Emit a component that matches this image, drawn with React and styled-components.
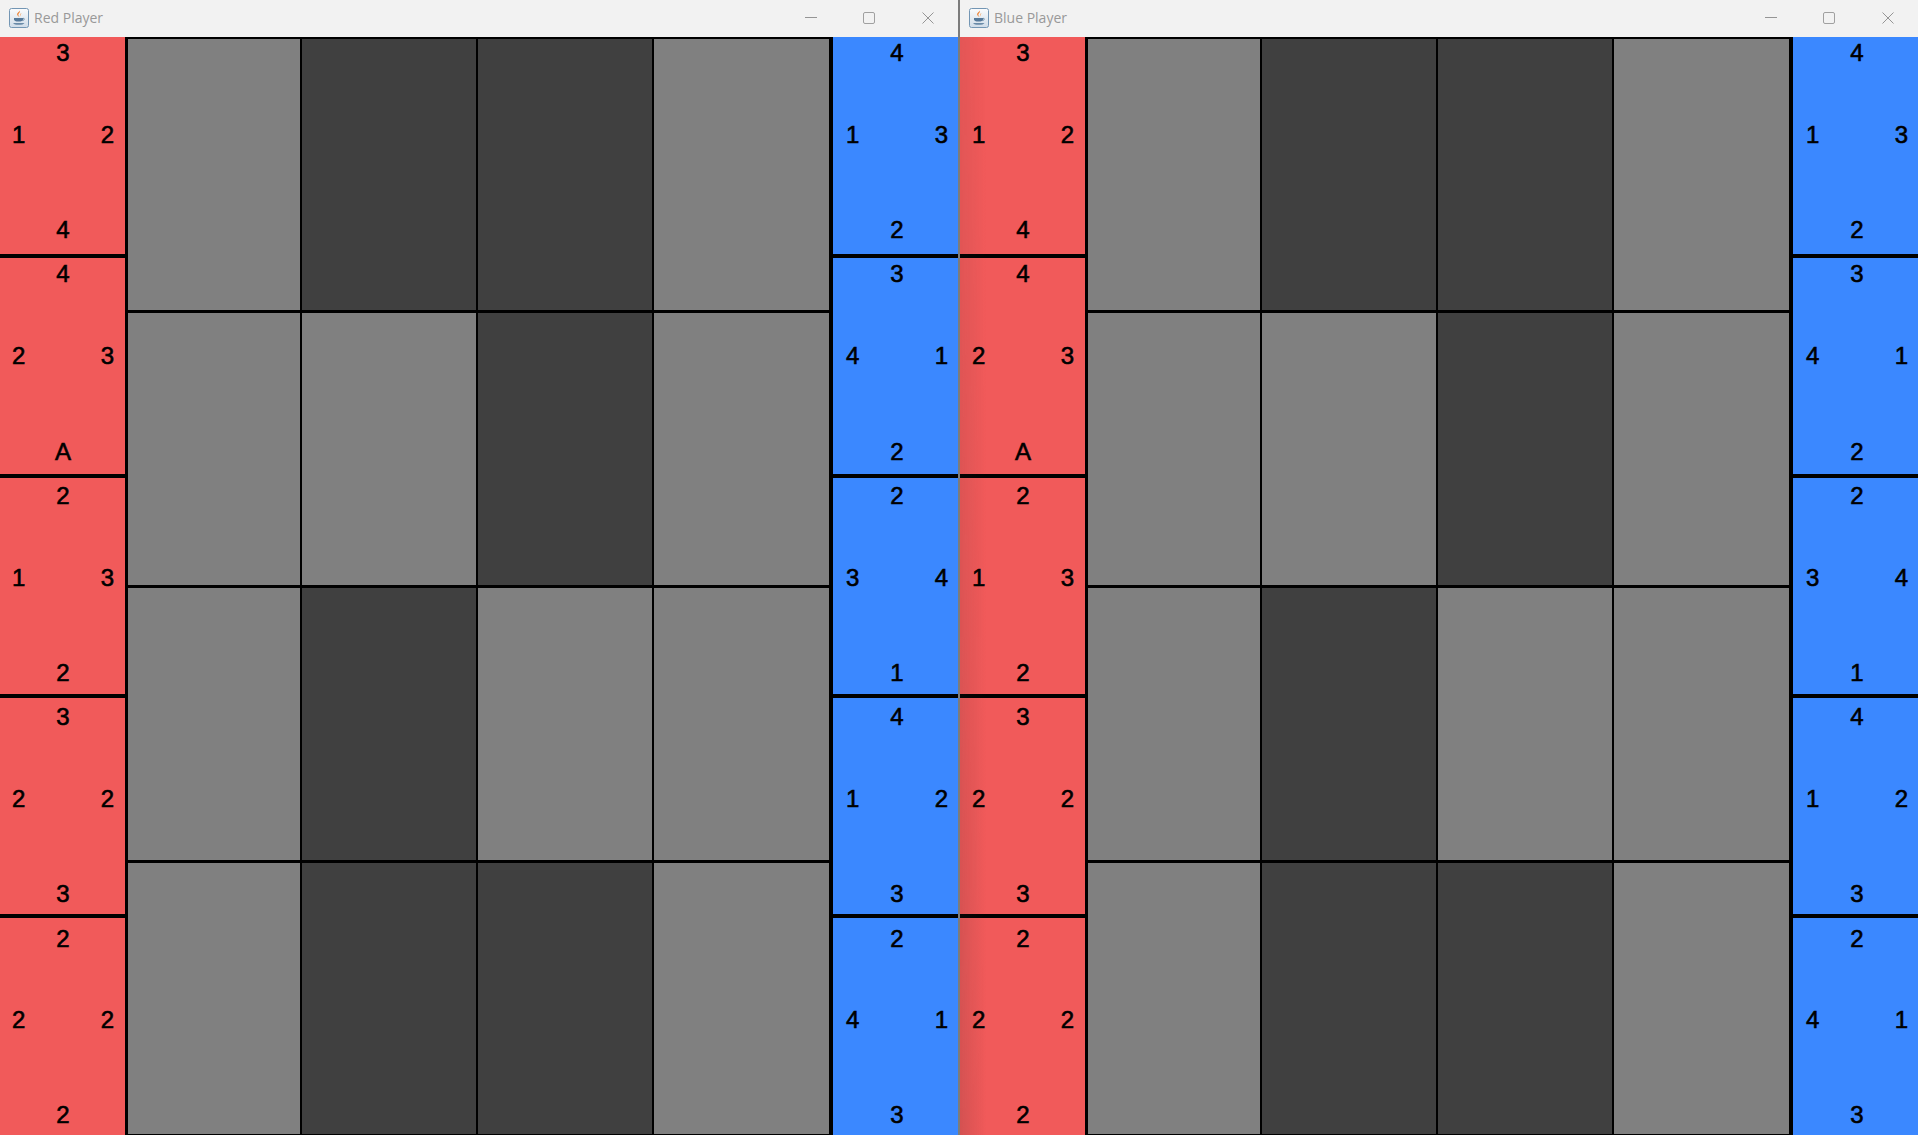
import React from "react";
import styled, { createGlobalStyle } from "styled-components";

const RED_HAND = [
  ["3", "1", "2", "4"],
  ["4", "2", "3", "A"],
  ["2", "1", "3", "2"],
  ["3", "2", "2", "3"],
  ["2", "2", "2", "2"],
];
const BLUE_HAND = [
  ["4", "1", "3", "2"],
  ["3", "4", "1", "2"],
  ["2", "3", "4", "1"],
  ["4", "1", "2", "3"],
  ["2", "4", "1", "3"],
];
// label insets differ a little per slot in the hand
const CARD_INSETS = [
  [2, 11],
  [2, 9],
  [3.5, 8],
  [4.5, 7],
  [7, 7],
];
// 1 = dark square
const BOARD = [
  [0, 1, 1, 0],
  [0, 0, 1, 0],
  [0, 1, 0, 0],
  [0, 1, 1, 0],
];

function JavaIcon() {
  return (
    <svg width="20" height="20" viewBox="0 0 20 20">
      <defs>
        <linearGradient id="tile" x1="0" y1="0" x2="0" y2="1">
          <stop offset="0" stopColor="#fbfcfd" />
          <stop offset="1" stopColor="#cfdce8" />
        </linearGradient>
      </defs>
      <rect x="0.5" y="0.5" width="19" height="19" rx="2" fill="url(#tile)" stroke="#7396b4" />
      <path d="M10.5 2.500c1.500 2-2 3-1 5 .3.7 1 1.200 1 1.200-2-.5-2.800-2-2.200-3.200.6-1.200 2.200-1.600 2.200-3z" fill="#ee7f2d" />
      <path d="M12.500 5c-1 .8-2 1.500-1.200 3.600-.1-1.400.5-2.300 1.200-3.600z" fill="#f39a4f" />
      <path d="M5 10h9v1.200c0 1.600-1.500 2.300-4.500 2.300S5 12.800 5 11.200z" fill="#55799a" />
      <path d="M14 10.300c1.800-.2 2 1.700-.6 2.300" fill="none" stroke="#55799a" strokeWidth="0.8" />
      <path d="M4 15h11.500c-.8 1.300-2.800 1.800-5.800 1.800S4.800 16.300 4 15z" fill="#6a8ba8" />
    </svg>
  );
}

function WindowControls() {
  return (
    <Controls>
      <ControlButton>
        <svg width="12" height="12" viewBox="0 0 12 12">
          <line x1="0" y1="5.5" x2="12" y2="5.5" stroke="#959595" strokeWidth="1" />
        </svg>
      </ControlButton>
      <ControlButton>
        <svg width="12" height="12" viewBox="0 0 12 12">
          <rect x="0.5" y="0.5" width="11" height="11" rx="1.5" fill="none" stroke="#a0a0a0" strokeWidth="1" />
        </svg>
      </ControlButton>
      <ControlButton>
        <svg width="12" height="12" viewBox="0 0 12 12">
          <path d="M0.500 0.500L11.500 11.500M11.500 0.500L0.500 11.500" stroke="#959595" strokeWidth="1" />
        </svg>
      </ControlButton>
    </Controls>
  );
}

function Hand({ cards, side }) {
  return (
    <HandColumn $side={side}>
      {cards.map(([top, left, right, bottom], i) => (
        <Card
          key={i}
          $side={side}
          $first={i === 0}
          $last={i === cards.length - 1}
          $insetTop={CARD_INSETS[i][0]}
          $insetBottom={CARD_INSETS[i][1]}
        >
          <Edge>{top}</Edge>
          <MiddleRow>
            <span>{left}</span>
            <span>{right}</span>
          </MiddleRow>
          <Edge>{bottom}</Edge>
        </Card>
      ))}
    </HandColumn>
  );
}

function PlayerWindow({ title, shaded }) {
  return (
    <Window>
      <TitleBar>
        <JavaIcon />
        <Title>{title}</Title>
        <WindowControls />
      </TitleBar>
      <GameArea $shaded={shaded}>
        <Hand cards={RED_HAND} side="red" />
        <Board>
          {BOARD.flat().map((dark, i) => (
            <Square key={i} $dark={dark} />
          ))}
        </Board>
        <Hand cards={BLUE_HAND} side="blue" />
      </GameArea>
    </Window>
  );
}

export default function App() {
  return (
    <>
      <GlobalStyle />
      <Desktop>
        <PlayerWindow title="Red Player" />
        <Divider />
        <PlayerWindow title="Blue Player" shaded />
      </Desktop>
    </>
  );
}

const GlobalStyle = createGlobalStyle`
  html, body {
    margin: 0;
    padding: 0;
    background: #f2f2f2;
    overflow: hidden;
  }
  * {
    box-sizing: border-box;
  }
`;

const Desktop = styled.div`
  width: 1918px;
  height: 1135px;
  display: flex;
`;
const Divider = styled.div`
  width: 2px;
  background-color: #7c7c7c;
`;
const Window = styled.div`
  width: 958px;
  display: flex;
  flex-direction: column;
`;
const TitleBar = styled.div`
  height: 37px;
  flex-shrink: 0;
  display: flex;
  align-items: center;
  padding-left: 9px;
  padding-bottom: 2px;
  background-color: #f2f2f2;
`;
const Title = styled.div`
  margin-left: 5px;
  font-family: "Open Sans", "Liberation Sans", sans-serif;
  font-size: 14px;
  color: #999999;
`;
const Controls = styled.div`
  margin-left: auto;
  display: flex;
  padding-right: 1px;
`;
const ControlButton = styled.div`
  width: 58px;
  height: 24px;
  display: flex;
  align-items: center;
  justify-content: center;

  &:last-child {
    margin-left: 1px;
  }
`;
const GameArea = styled.div`
  flex: 1;
  min-height: 0;
  display: grid;
  grid-template-columns: 127px 703px 128px;
  position: relative;

  ${(p) =>
    p.$shaded &&
    `&::after {
      content: "";
      position: absolute;
      top: 0;
      bottom: 0;
      left: 0;
      width: 26px;
      background: linear-gradient(90deg, rgba(60, 40, 40, 0.16), rgba(60, 40, 40, 0));
      -webkit-mask-image: linear-gradient(180deg, rgba(0, 0, 0, 0.45), #000);
      mask-image: linear-gradient(180deg, rgba(0, 0, 0, 0.45), #000);
    }`}
`;
const HandColumn = styled.div`
  display: grid;
  grid-template-rows: 219px 220px 220px 220px 219px;
  border-style: solid;
  border-color: #000;
  border-width: ${(p) => (p.$side === "red" ? "0 2px 0 0" : "0 0 0 3px")};
`;
const Card = styled.div`
  display: grid;
  grid-template-rows: auto 1fr auto;
  padding: ${(p) => p.$insetTop}px ${(p) => (p.$side === "red" ? 11 : 10)}px
    ${(p) => p.$insetBottom}px ${(p) => (p.$side === "red" ? 12 : 13)}px;
  background-color: ${(p) => (p.$side === "red" ? "#f15a5a" : "#3b88ff")};
  border-style: solid;
  border-color: #000;
  border-width: ${(p) => (p.$first ? 0 : 2)}px 0 ${(p) => (p.$last ? 0 : 2)}px;
  font-family: "Liberation Sans", Arial, sans-serif;
  font-size: 24px;
  line-height: 27px;
  color: #000;
  -webkit-text-stroke: 0.6px #000;
`;
const Edge = styled.div`
  text-align: center;
`;
const MiddleRow = styled.div`
  display: flex;
  align-items: center;
  justify-content: space-between;
  padding-bottom: 13.5px;
`;
const Board = styled.div`
  display: grid;
  grid-template-columns: 174px 176px 176px 177px;
  grid-template-rows: 274px 275px 275px 274px;
  border-top: 1px solid #000;
  overflow: hidden;
`;
const Square = styled.div`
  background-color: ${(p) => (p.$dark ? "#404040" : "#808080")};
  border: 1px solid #000;
  border-bottom-width: 2px;
`;
